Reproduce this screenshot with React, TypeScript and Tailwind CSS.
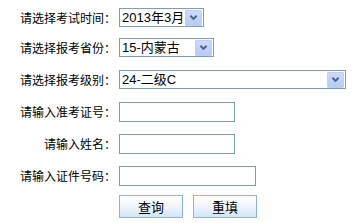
import React from "react";

const font = { fontFamily: '"Noto Sans CJK SC", "Liberation Sans", sans-serif' };

function Chevron() {
  return (
    <svg width="17" height="17" viewBox="0 0 17 17">
      <polyline points="5,6.5 8.5,10 12,6.5" fill="none" stroke="#4d6185" strokeWidth="2.2" />
    </svg>
  );
}

function FakeSelect({ w, text }: { w: string; text: string }) {
  return (
    <div className={`${w} h-[19px] border border-[#7f9db9] bg-white flex items-center p-[0px] pr-[1px]`}>
      <span
        className="flex-1 pl-[2px] text-[13px] leading-none text-black whitespace-nowrap"
        style={{ fontFamily: '"Liberation Sans", "Noto Sans CJK SC", sans-serif' }}
      >
        {text}
      </span>
      <div className="w-[17px] h-[16px] border border-[#bccff7] bg-gradient-to-b from-[#cbdaFc] to-[#b7cbf6] flex items-center justify-center rounded-[1px]">
        <Chevron />
      </div>
    </div>
  );
}

function Row({ label, mt, h, children }: { label: string; mt: string; h: string; children: React.ReactNode }) {
  return (
    <div className={`flex items-center ${mt} ${h}`}>
      <div className="w-[116px] text-right text-[12px] leading-none text-black pr-0" style={font}>
        {label}
      </div>
      <div className="ml-[3px] flex items-center">{children}</div>
    </div>
  );
}

function Input({ w }: { w: string }) {
  return <div className={`${w} h-[20px] border border-[#7f9db9] bg-white`} />;
}

function Btn({ text }: { text: string }) {
  return (
    <div
      className="w-[64px] h-[23px] border border-[#86b4e8] bg-gradient-to-b from-white via-[#f0f5fc] to-[#d3e3f7] flex items-center justify-center text-[13px] text-black leading-none"
      style={font}
    >
      {text}
    </div>
  );
}

export default function App() {
  return (
    <div className="w-[355px] h-[223px] bg-white pt-[8px] flex flex-col">
      <Row label="请选择考试时间：" mt="mt-0" h="h-[19px]">
        <FakeSelect w="w-[85px]" text="2013年3月" />
      </Row>
      <Row label="请选择报考省份：" mt="mt-[11px]" h="h-[19px]">
        <FakeSelect w="w-[95px]" text="15-内蒙古" />
      </Row>
      <Row label="请选择报考级别：" mt="mt-[13px]" h="h-[19px]">
        <FakeSelect w="w-[227px]" text="24-二级C" />
      </Row>
      <Row label="请输入准考证号：" mt="mt-[13px]" h="h-[20px]">
        <Input w="w-[116px]" />
      </Row>
      <Row label="请输入姓名：" mt="mt-[12px]" h="h-[20px]">
        <Input w="w-[116px]" />
      </Row>
      <Row label="请输入证件号码：" mt="mt-[12px]" h="h-[20px]">
        <Input w="w-[137px]" />
      </Row>
      <div className="flex mt-[9px] pl-[119px] gap-[10px]">
        <Btn text="查询" />
        <Btn text="重填" />
      </div>
    </div>
  );
}
